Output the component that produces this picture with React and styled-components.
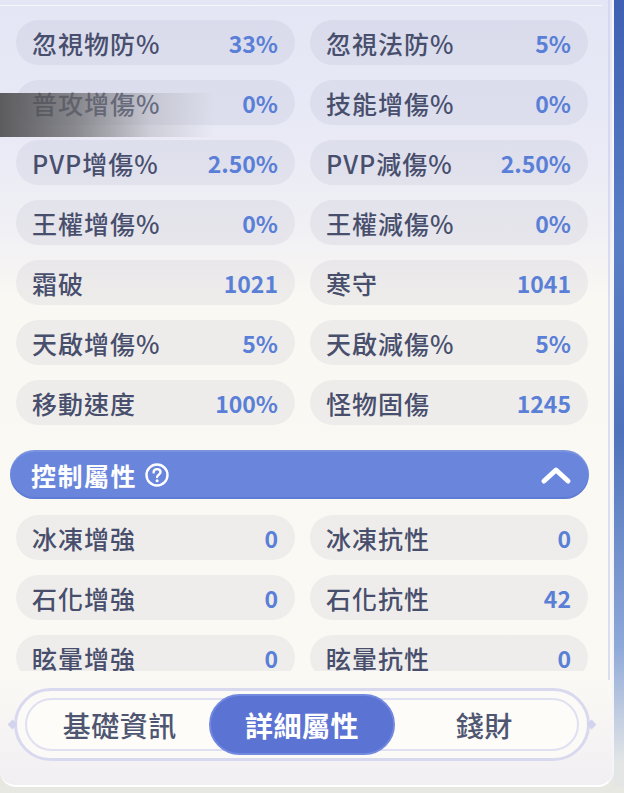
import styled, { createGlobalStyle } from "styled-components";

const GlobalStyle = createGlobalStyle`
  body {
    margin: 0;
    background: #e7e8e2;
    font-family: "Noto Sans CJK TC", "Noto Sans", sans-serif;
  }
`;

const Screen = styled.div`
  width: 624px;
  height: 793px;
  display: flex;
  overflow: hidden;
  background: #e7e8e2;
`;

const Panel = styled.div`
  position: relative;
  width: 614px;
  height: 787px;
  flex-shrink: 0;
  box-sizing: border-box;
  display: flex;
  flex-direction: column;
  overflow: hidden;
  border-right: 2px solid #f4f4fb;
  border-bottom: 2px solid #ffffff;
  border-radius: 0 0 16px 16px;
  background: linear-gradient(
    180deg,
    #e4e6f5 0%,
    #e9eaf6 18%,
    #f1f0f4 30%,
    #faf8f3 38%,
    #fbf9f4 86%,
    #f2eff3 100%
  );

  &::after {
    content: "";
    position: absolute;
    top: 0;
    right: 2px;
    width: 2px;
    height: 680px;
    background: rgba(205, 209, 240, 0.7);
  }
`;

const SideStrip = styled.div`
  flex: 1;
  height: 787px;
  background: linear-gradient(
    180deg,
    #3e60b2 0%,
    #5a7ec6 30%,
    #4f72bb 55%,
    #8ea8d8 82%,
    #e4e6e6 97%
  );
`;

const Shade = styled.div`
  position: absolute;
  top: 93px;
  left: 0;
  width: 215px;
  height: 44px;
  pointer-events: none;
  background: linear-gradient(
    90deg,
    rgba(80, 80, 82, 0.92) 0%,
    rgba(105, 105, 108, 0.75) 35%,
    rgba(160, 160, 165, 0.38) 70%,
    rgba(200, 200, 210, 0) 100%
  );
`;

const ScrollArea = styled.div`
  height: 671px;
  flex-shrink: 0;
  overflow: hidden;
  box-sizing: border-box;
  padding: 5px 26px 0 16px;
`;

const TopRule = styled.div`
  height: 1px;
  margin: 0 -16px 14px;
  background: rgba(255, 255, 255, 0.7);
`;

const Grid = styled.div`
  display: grid;
  grid-template-columns: 279px 278px;
  column-gap: 15px;
  row-gap: 15px;
`;

const Stat = styled.div`
  height: 45px;
  box-sizing: border-box;
  padding: 0 17px 0 16px;
  border-radius: 23px;
  background: rgba(72, 72, 120, 0.065);
  display: flex;
  align-items: center;
  justify-content: space-between;
`;

const Label = styled.span`
  font-size: 25px;
  font-weight: 500;
  letter-spacing: 1px;
  color: #484f6d;
  white-space: nowrap;
`;

const Value = styled.span`
  font-size: 23px;
  font-weight: 700;
  color: #5a7fd7;
  white-space: nowrap;
`;

const SectionHeader = styled.div`
  margin: 25px 0 16px -6px;
  width: 579px;
  height: 49px;
  box-sizing: border-box;
  border-radius: 25px;
  padding: 0 17px 0 21px;
  background: #6a86dc;
  box-shadow: inset 0 2px 0 rgba(255, 255, 255, 0.12),
    inset 0 -2px 0 rgba(60, 90, 190, 0.25);
  display: flex;
  align-items: center;
  justify-content: space-between;
`;

const HeaderTitle = styled.div`
  display: flex;
  align-items: center;
  gap: 7px;
  font-size: 25px;
  font-weight: 700;
  letter-spacing: 1.5px;
  color: #ffffff;
`;

const TabArea = styled.div`
  padding: 17px 22px 0 14px;
`;

const OuterRing = styled.div`
  position: relative;
  height: 73px;
  box-sizing: border-box;
  border: 3px solid #d8d9ef;
  border-radius: 37px;
  background: #fbfaf7;
  padding: 7px 8px;

  &::before,
  &::after {
    content: "";
    position: absolute;
    top: 30px;
    width: 7px;
    height: 7px;
    background: #d2d4ee;
    transform: rotate(45deg);
  }
  &::before {
    left: -8px;
  }
  &::after {
    right: -8px;
  }
`;

const InnerRing = styled.div`
  height: 53px;
  box-sizing: border-box;
  border: 2px solid #dfe0f1;
  border-radius: 27px;
  background: #fdfcf9;
  display: flex;
`;

const Tab = styled.div`
  flex: 1;
  margin: -6px ${(p) => (p.$active ? "-3px" : "0")};
  border-radius: 31px;
  box-sizing: border-box;
  display: flex;
  align-items: center;
  justify-content: center;
  font-size: 28px;
  font-weight: ${(p) => (p.$active ? 700 : 500)};
  letter-spacing: 0.5px;
  color: ${(p) => (p.$active ? "#ffffff" : "#4f5671")};
  background: ${(p) => (p.$active ? "#5b73d3" : "transparent")};
  border: 2px solid ${(p) => (p.$active ? "#7289df" : "transparent")};
`;

const mainStats = [
  ["忽視物防%", "33%"],
  ["忽視法防%", "5%"],
  ["普攻增傷%", "0%"],
  ["技能增傷%", "0%"],
  ["PVP增傷%", "2.50%"],
  ["PVP減傷%", "2.50%"],
  ["王權增傷%", "0%"],
  ["王權減傷%", "0%"],
  ["霜破", "1021"],
  ["寒守", "1041"],
  ["天啟增傷%", "5%"],
  ["天啟減傷%", "5%"],
  ["移動速度", "100%"],
  ["怪物固傷", "1245"],
];

const controlStats = [
  ["冰凍增強", "0"],
  ["冰凍抗性", "0"],
  ["石化增強", "0"],
  ["石化抗性", "42"],
  ["眩暈增強", "0"],
  ["眩暈抗性", "0"],
];

function HelpIcon() {
  return (
    <svg width="26" height="26" viewBox="0 0 26 26" fill="none">
      <circle cx="13" cy="13" r="10.5" stroke="#fff" strokeWidth="2.4" />
      <path
        d="M9.6 10.4c0-2 1.5-3.3 3.5-3.3s3.4 1.3 3.4 3c0 2.6-3.4 2.6-3.4 5"
        stroke="#fff"
        strokeWidth="2.4"
        strokeLinecap="round"
      />
      <circle cx="13.1" cy="18.8" r="1.5" fill="#fff" />
    </svg>
  );
}

function ChevronUp() {
  return (
    <svg width="32" height="20" viewBox="0 0 32 20" fill="none">
      <path
        d="M4 16 L16 5 L28 16"
        stroke="#fff"
        strokeWidth="5"
        strokeLinecap="round"
        strokeLinejoin="round"
      />
    </svg>
  );
}

function StatGrid({ items }) {
  return (
    <Grid>
      {items.map(([label, value]) => (
        <Stat key={label}>
          <Label>{label}</Label>
          <Value>{value}</Value>
        </Stat>
      ))}
    </Grid>
  );
}

export default function App() {
  return (
    <>
      <GlobalStyle />
      <Screen>
        <Panel>
          <ScrollArea>
            <TopRule />
            <StatGrid items={mainStats} />
            <SectionHeader>
              <HeaderTitle>
                控制屬性
                <HelpIcon />
              </HeaderTitle>
              <ChevronUp />
            </SectionHeader>
            <StatGrid items={controlStats} />
          </ScrollArea>
          <TabArea>
            <OuterRing>
              <InnerRing>
                <Tab>基礎資訊</Tab>
                <Tab $active>詳細屬性</Tab>
                <Tab>錢財</Tab>
              </InnerRing>
            </OuterRing>
          </TabArea>
          <Shade />
        </Panel>
        <SideStrip />
      </Screen>
    </>
  );
}
